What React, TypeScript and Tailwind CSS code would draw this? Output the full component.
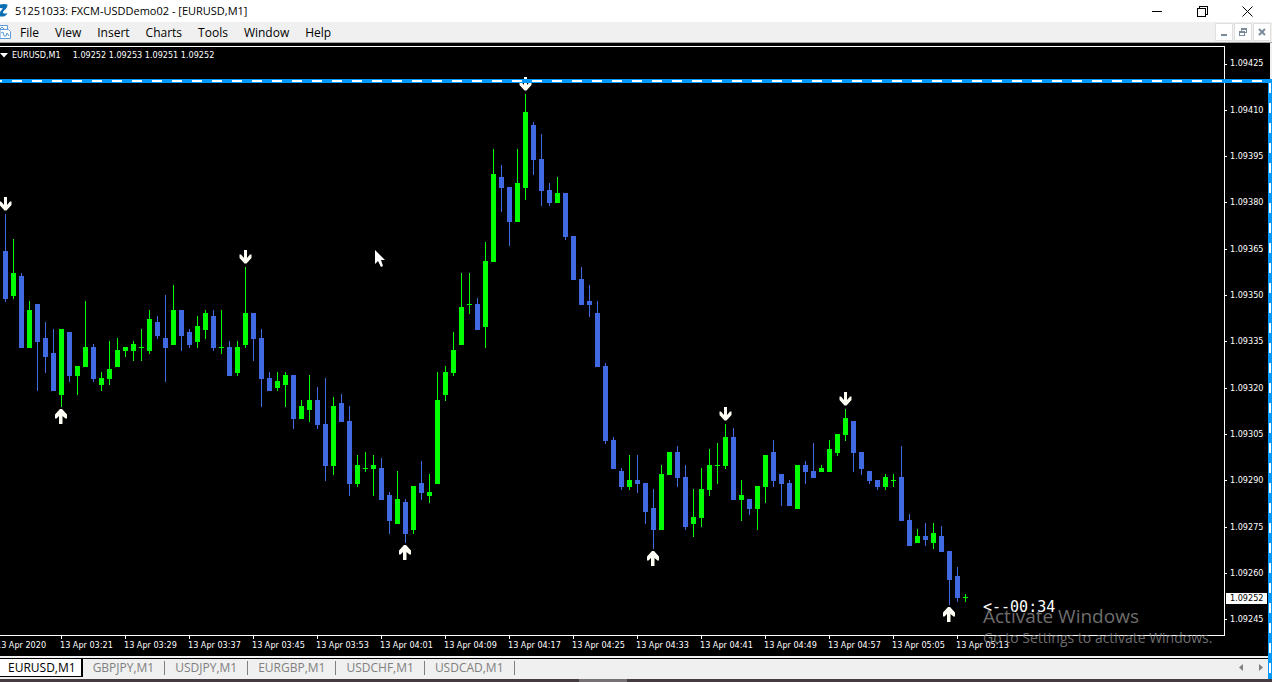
import React, { useState } from 'react';

type Direction = 'up' | 'down';
// x of the wick is derived from the index: [high, bodyTop, bodyBottom, low, bullish]
type Candle = [number, number, number, number, 0 | 1];

interface Signal {
    x: number;
    y: number;
    direction: Direction;
}

const MENU_ITEMS = ['File', 'View', 'Insert', 'Charts', 'Tools', 'Window', 'Help'];

const SYMBOL_TABS = ['EURUSD,M1', 'GBPJPY,M1', 'USDJPY,M1', 'EURGBP,M1', 'USDCHF,M1', 'USDCAD,M1'];

const PRICES = [
    '1.09425', '1.09410', '1.09395', '1.09380', '1.09365', '1.09350', '1.09335',
    '1.09320', '1.09305', '1.09290', '1.09275', '1.09260', '1.09245',
];

const TIMES = [
    '13 Apr 2020', '13 Apr 03:21', '13 Apr 03:29', '13 Apr 03:37', '13 Apr 03:45', '13 Apr 03:53',
    '13 Apr 04:01', '13 Apr 04:09', '13 Apr 04:17', '13 Apr 04:25', '13 Apr 04:33', '13 Apr 04:41',
    '13 Apr 04:49', '13 Apr 04:57', '13 Apr 05:05', '13 Apr 05:13',
];

const CANDLES: Candle[] = [
    [214, 251, 299, 302, 0], [239, 273, 296, 299, 1], [273, 276, 348, 348, 0], [301, 310, 348, 348, 1],
    [304, 304, 342, 391, 0], [322, 338, 357, 373, 0], [329, 353, 391, 391, 0], [329, 329, 395, 407, 1],
    [332, 332, 376, 382, 0], [366, 366, 376, 395, 1], [301, 347, 367, 367, 1], [344, 347, 379, 382, 0],
    [372, 378, 385, 391, 1], [341, 369, 379, 385, 1], [338, 350, 367, 367, 1], [347, 347, 351, 357, 1],
    [341, 344, 351, 361, 1], [329, 347, 348, 361, 1], [310, 319, 351, 354, 1], [316, 322, 336, 339, 0],
    [295, 338, 348, 382, 0], [285, 310, 345, 345, 1], [310, 310, 336, 351, 0], [329, 332, 345, 348, 0],
    [316, 326, 342, 348, 1], [310, 313, 330, 339, 1], [310, 316, 348, 351, 0], [310, 347, 348, 354, 1],
    [341, 347, 376, 376, 0], [341, 347, 373, 376, 1], [267, 313, 345, 348, 1], [313, 313, 339, 361, 0],
    [329, 338, 379, 407, 0], [372, 378, 391, 391, 0], [372, 381, 388, 391, 1], [372, 375, 385, 407, 1],
    [375, 375, 419, 429, 0], [400, 406, 419, 419, 1], [375, 400, 410, 422, 1], [387, 400, 425, 429, 0],
    [378, 424, 466, 481, 0], [397, 406, 466, 475, 1], [394, 403, 422, 422, 0], [406, 421, 484, 496, 0],
    [455, 465, 484, 487, 1], [452, 468, 469, 472, 1], [455, 465, 469, 496, 1], [458, 468, 500, 500, 0],
    [492, 495, 521, 534, 0], [471, 499, 524, 524, 1], [499, 502, 534, 543, 0], [486, 486, 530, 534, 1],
    [461, 483, 493, 500, 0], [474, 492, 496, 503, 1], [372, 400, 484, 484, 1], [366, 372, 395, 401, 1],
    [332, 350, 373, 376, 1], [273, 307, 345, 345, 1], [273, 304, 305, 314, 1], [298, 304, 330, 330, 0],
    [242, 261, 327, 348, 1], [149, 174, 262, 262, 1], [165, 177, 188, 212, 0], [187, 187, 222, 246, 0],
    [149, 183, 222, 222, 1], [94, 112, 188, 200, 1], [122, 125, 160, 175, 0], [134, 159, 191, 206, 0],
    [183, 190, 203, 206, 0], [177, 193, 203, 203, 1], [193, 193, 237, 240, 0], [236, 236, 280, 280, 0],
    [267, 279, 305, 305, 0], [285, 301, 305, 317, 0], [301, 313, 367, 367, 0], [363, 366, 441, 444, 0],
    [437, 440, 469, 469, 0], [468, 471, 487, 490, 0], [455, 480, 487, 490, 1], [455, 480, 484, 493, 0],
    [483, 483, 512, 524, 0], [489, 508, 530, 549, 0], [465, 474, 530, 530, 1], [452, 452, 475, 475, 1],
    [446, 452, 478, 487, 0], [465, 477, 527, 530, 0], [489, 517, 524, 537, 1], [468, 489, 518, 527, 1],
    [449, 465, 490, 496, 1], [443, 465, 466, 484, 1], [424, 437, 466, 469, 1], [428, 437, 500, 500, 0],
    [480, 495, 500, 521, 1], [499, 499, 509, 515, 0], [486, 486, 509, 530, 1], [455, 455, 487, 503, 1],
    [440, 452, 481, 487, 0], [474, 474, 484, 506, 0], [480, 483, 506, 506, 0], [465, 465, 509, 509, 1],
    [461, 465, 472, 484, 0], [443, 471, 478, 478, 0], [465, 468, 472, 472, 1], [440, 449, 472, 472, 1],
    [434, 434, 453, 456, 1], [409, 418, 435, 441, 1], [421, 421, 453, 472, 0], [452, 452, 469, 475, 0],
    [471, 471, 481, 484, 0], [480, 480, 487, 490, 0], [474, 477, 487, 490, 1], [474, 480, 481, 487, 1],
    [446, 477, 521, 521, 0], [514, 520, 546, 546, 0], [529, 536, 543, 543, 1], [523, 536, 540, 546, 0],
    [523, 533, 543, 549, 1], [526, 536, 552, 552, 0], [551, 551, 580, 605, 0], [567, 576, 598, 602, 0],
    [594, 597, 598, 602, 1],
];

const SIGNALS: Signal[] = [
    { x: 5, y: 197, direction: 'down' },
    { x: 245, y: 250, direction: 'down' },
    { x: 525, y: 77, direction: 'down' },
    { x: 725, y: 407, direction: 'down' },
    { x: 845, y: 392, direction: 'down' },
    { x: 61, y: 409, direction: 'up' },
    { x: 405, y: 545, direction: 'up' },
    { x: 653, y: 551, direction: 'up' },
    { x: 949, y: 607, direction: 'up' },
];

// Candle data is stored in window coordinates, the plot starts below the bars
const PLOT_TOP = 47;

const ARROW_PATHS: Record<Direction, string> = {
    down: 'M-1 0H2V8L5 4.5H6.5V8L1.5 13.5H-0.5L-5.5 8V4.5H-4L-1 8Z',
    up: 'M-1 0H1L6 5.5V9.5H4.5L1.5 7V15H-2V7L-4.5 9.5H-6V5.5Z',
};

const PriceChart: React.FC = () => (
    <svg className="absolute inset-0 w-full h-full" role="img" aria-label="EURUSD M1 candlestick chart">
        <g transform={`translate(0 ${-PLOT_TOP})`}>
            <g shapeRendering="crispEdges">
                {CANDLES.map(([high, top, bottom, low, bullish], i) => {
                    const x = 5 + i * 8;
                    return (
                        <g key={i} fill={bullish ? '#00ff00' : '#4169e1'}>
                            <rect x={x} y={high} width={1} height={low - high} />
                            <rect x={x - 2} y={top} width={5} height={bottom - top} />
                        </g>
                    );
                })}
            </g>
            {SIGNALS.map(s => (
                <path key={`${s.x}-${s.y}`} d={ARROW_PATHS[s.direction]} transform={`translate(${s.x} ${s.y})`} fill="#fffff5" />
            ))}
            <path d="M375 250V264L378 261L381 267L383 266L381 260H385Z" fill="#ffffff" />
        </g>
    </svg>
);

const TitleBar: React.FC = () => (
    <header className="flex items-center h-[22px] bg-white text-black">
        <svg className="w-2 h-4 shrink-0" viewBox="0 0 8 16" aria-hidden="true">
            <path d="M0 1.5Q4 0.5 7.5 1.5Q7.5 5 4 7.5Q2.5 9 3 10Q5 11 7.5 10Q6.5 13 4 13.5H0V9.5Q0 8 2.5 6Q3.5 5 0 5Z" fill="#0a6eb4" />
        </svg>
        <h1 className="ml-[7px] text-[11px] leading-4 whitespace-nowrap">51251033: FXCM-USDDemo02 - [EURUSD,M1]</h1>
        <div className="flex ml-auto mr-[2px]">
            <button aria-label="Minimize" className="w-[45px] h-[20px] flex items-center justify-center">
                <svg width="11" height="11" viewBox="0 0 11 11" shapeRendering="crispEdges"><path d="M0 5H10V6H0Z" /></svg>
            </button>
            <button aria-label="Restore" className="w-[45px] h-[20px] flex items-center justify-center">
                <svg width="11" height="11" viewBox="0 0 11 11" fill="none" stroke="black" shapeRendering="crispEdges">
                    <path d="M0.5 2.5H8.5V10.5H0.5ZM2.5 2.5V0.5H10.5V8.5H8.5" />
                </svg>
            </button>
            <button aria-label="Close" className="w-[45px] h-[20px] flex items-center justify-center">
                <svg width="11" height="11" viewBox="0 0 11 11" fill="none" stroke="black"><path d="M0.5 0.5L10.5 10.5M10.5 0.5L0.5 10.5" /></svg>
            </button>
        </div>
    </header>
);

const MenuBar: React.FC = () => (
    <nav className="flex items-center h-[21px] bg-[#f0f0f0] border-b border-[#a0a0a0] text-black">
        <svg className="w-3 h-[15px] shrink-0" viewBox="0 0 12 15" fill="none" stroke="#5b9bdc" aria-hidden="true">
            <path d="M0 0.5H7.5V4.5M0 4L2 2L4 4" fill="#ffffff" />
            <path d="M0 4.5H8.5L10.5 6.5V13.5H0Z" fill="#ffffff" />
            <path d="M1 8L3 7L4 11L6 11L7 8L9 11" />
        </svg>
        <ul className="flex pb-[2px]">
            {MENU_ITEMS.map(item => (
                <li key={item}>
                    <button className="px-2 text-[12px] leading-5">{item}</button>
                </li>
            ))}
        </ul>
        <div className="flex gap-px ml-auto mr-px text-[#7a8a99]">
            <button aria-label="Minimize chart" className="w-[18px] h-[18px] flex items-center justify-center bg-white border border-[#e0e0e0]">
                <svg width="8" height="8" viewBox="0 0 8 8" fill="currentColor"><path d="M1 6H7V8H1Z" /></svg>
            </button>
            <button aria-label="Restore chart" className="w-[18px] h-[18px] flex items-center justify-center bg-white border border-[#e0e0e0]">
                <svg width="8" height="8" viewBox="0 0 8 8" fill="currentColor" shapeRendering="crispEdges">
                    <path d="M2 0H8V5H6V4H7V2H3V3H2ZM0 3H6V8H0ZM1 5V7H5V5Z" fillRule="evenodd" />
                </svg>
            </button>
            <button aria-label="Close chart" className="w-[18px] h-[18px] flex items-center justify-center bg-white border border-[#e0e0e0]">
                <svg width="8" height="8" viewBox="0 0 8 8" stroke="currentColor" strokeWidth="2"><path d="M1 1L7 7M7 1L1 7" /></svg>
            </button>
        </div>
    </nav>
);

const PriceAxis: React.FC = () => (
    <div className="relative w-[45px] shrink-0">
        <ul className="h-full flex flex-col justify-between pt-3 pb-[10px]">
            {PRICES.map(price => (
                <li key={price} className="flex items-center gap-[3px] h-3">
                    <span className="w-[2px] h-px bg-white" />
                    <span>{price}</span>
                </li>
            ))}
        </ul>
        <span className="absolute left-px right-[3px] bottom-8 h-[11px] pl-1 leading-[11px] bg-white text-black">1.09252</span>
    </div>
);

const TimeAxis: React.FC = () => (
    <ul className="flex -ml-1 h-5">
        {TIMES.map(time => (
            <li key={time} className="w-16 shrink-0 whitespace-nowrap">
                <span className="block w-px h-[3px] ml-px bg-white" />
                <span className="block leading-3">{time}</span>
            </li>
        ))}
    </ul>
);

// Dashed marquee of the screen region being recorded
const CaptureFrame: React.FC = () => (
    <div className="absolute left-0 right-0 top-[79px] bottom-[3px] pointer-events-none" aria-hidden="true">
        <div className="absolute top-0 inset-x-0 h-1 bg-[#0099ff] flex items-center">
            <div className="w-full h-[2px] bg-[repeating-linear-gradient(to_right,#fff_0_2px,transparent_2px_12px,#fff_12px_20px)]" />
        </div>
        <div className="absolute top-1 bottom-0 right-0 w-1 bg-[#0099ff] flex justify-center">
            <div className="w-[2px] h-full bg-[repeating-linear-gradient(to_bottom,#fff_0_10px,transparent_10px_20px)]" />
        </div>
    </div>
);

const SymbolTabs: React.FC<{ active: string; onSelect: (symbol: string) => void }> = ({ active, onSelect }) => (
    <footer className="flex items-start h-[21px] bg-[#f0f0f0] border-t border-black text-[12px] leading-4">
        {SYMBOL_TABS.map(symbol => (
            <button
                key={symbol}
                onClick={() => onSelect(symbol)}
                className={active === symbol
                    ? 'h-[18px] pl-2 pr-[5px] bg-white text-black border-r-2 border-b border-black'
                    : 'px-[10px] mt-[2px] h-[14px] leading-[14px] text-[#808080] border-r border-[#808080]'}
            >
                {symbol}
            </button>
        ))}
        <div className="flex gap-[14px] ml-auto mr-[9px] mt-[5px]">
            <button aria-label="Scroll tabs left"><svg width="5" height="7" viewBox="0 0 5 7" fill="#808080"><path d="M4 0V7L0 3.5Z" /></svg></button>
            <button aria-label="Scroll tabs right"><svg width="5" height="7" viewBox="0 0 5 7" fill="#808080"><path d="M1 0V7L5 3.5Z" /></svg></button>
        </div>
    </footer>
);

export default function App() {
    const [activeSymbol, setActiveSymbol] = useState('EURUSD,M1');

    return (
        <div className="relative h-screen flex flex-col overflow-hidden bg-black font-['Open_Sans',sans-serif]">
            <TitleBar />
            <MenuBar />

            <main className="flex-1 min-h-0 flex flex-col pt-[3px] bg-black border-b-2 border-r-2 border-[#f0f0f0] text-white text-[9px] font-['DejaVu_Sans_Condensed','DejaVu_Sans',sans-serif]">
                <div className="flex-1 min-h-0 flex">
                    <section className="relative flex-1 border-t border-r border-b border-white">
                        <PriceChart />
                        <h2 className="relative flex items-center pt-[2px] leading-3">
                            <svg width="8" height="5" viewBox="0 0 8 5" fill="white" aria-hidden="true"><path d="M0 0H8L4 4.5Z" /></svg>
                            <span className="ml-1">EURUSD,M1</span>
                            <span className="ml-3">1.09252 1.09253 1.09251 1.09252</span>
                        </h2>
                        <p className="absolute left-[983px] bottom-5 text-[15px] leading-4 font-['DejaVu_Sans_Mono',monospace]">{'<--00:34'}</p>
                    </section>
                    <PriceAxis />
                </div>
                <TimeAxis />
            </main>

            <SymbolTabs active={activeSymbol} onSelect={setActiveSymbol} />
            <div className="h-[3px] flex bg-[#453c41]">
                <span className="w-12 h-full ml-[579px] bg-[#777075]" />
            </div>

            <CaptureFrame />
            <aside className="absolute right-[52px] bottom-[34px] w-[237px] text-[#8c8c8c]/80 whitespace-nowrap">
                <p className="text-[19px] leading-6">Activate Windows</p>
                <p className="text-[14px] leading-5">Go to Settings to activate Windows.</p>
            </aside>
        </div>
    );
}
